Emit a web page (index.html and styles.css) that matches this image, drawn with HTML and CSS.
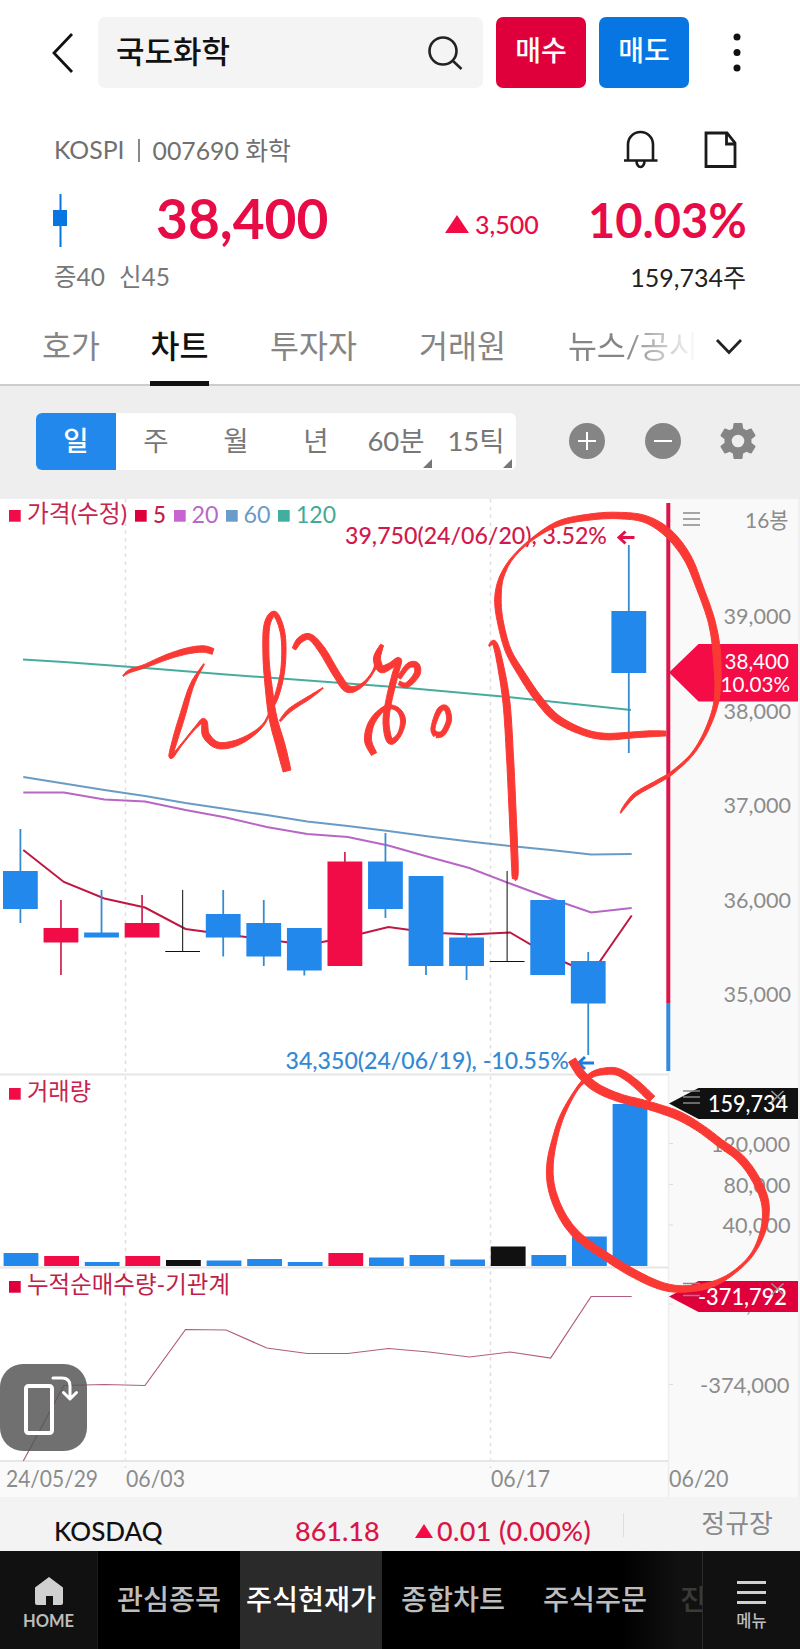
FILE: index.html
```html
<!DOCTYPE html>
<html lang="ko">
<head>
<meta charset="utf-8">
<title>국도화학 - 차트</title>
<link rel="stylesheet" href="styles.css">
</head>
<body>
<div class="app">
  <header class="top">
    <svg class="back" width="24" height="42" viewBox="0 0 24 42"><path d="M21 2 3 21 21 40"/></svg>
    <div class="search">
      <span>국도화학</span>
      <svg width="40" height="40" viewBox="0 0 40 40"><circle cx="18" cy="18" r="13.5"/><path d="m28 28 8.500 8"/></svg>
    </div>
    <button class="trade buy">매수</button>
    <button class="trade sell">매도</button>
    <svg class="more" width="8" height="42" viewBox="0 0 8 42"><circle cx="4" cy="5" r="3.500"/><circle cx="4" cy="20.500" r="3.500"/><circle cx="4" cy="36" r="3.500"/></svg>
  </header>

  <section class="quote">
    <div class="row meta">
      <span>KOSPI</span><i class="bar"></i><span>007690 화학</span>
      <svg class="bell" width="36" height="40" viewBox="0 0 36 40"><path d="M5 30V14.500a12.500 12.500 0 0 1 25 0V30M1 30.500h33.500M13.500 31a4 6 0 0 0 8 0"/></svg>
      <svg class="doc" width="34" height="40" viewBox="0 0 34 40"><path d="M2 3h21l8 10v23.500H2zM22.500 3v11H31"/></svg>
    </div>
    <div class="row price">
      <svg class="mini" width="14" height="53" viewBox="0 0 14 53"><path d="M6.500 0h2v53h-2zM0 16h14v16H0z"/></svg>
      <strong class="now">38,400</strong>
      <svg class="up" width="24" height="18" viewBox="0 0 24 18"><path d="M12 0 24 18H0z"/></svg>
      <span class="diff">3,500</span>
      <strong class="rate">10.03%</strong>
    </div>
    <div class="row sub"><span>증40</span><span>신45</span><span class="vol">159,734주</span></div>
  </section>

  <nav class="tabs">
    <span class="tab">호가</span><span class="tab t2 on">차트</span><span class="tab t3">투자자</span><span class="tab t4">거래원</span><span class="tab t5">뉴스/공시</span>
    <svg class="chev" width="28" height="18" viewBox="0 0 28 18"><path d="m2 2 12 12.500L26 2"/></svg>
  </nav>

  <section class="tools">
    <div class="periods">
      <span class="on">일</span><span>주</span><span>월</span><span>년</span><span class="pick">60분</span><span class="pick">15틱</span>
    </div>
    <svg class="tool" width="36" height="36" viewBox="0 0 36 36"><circle cx="18" cy="18" r="18"/><path d="M9 18h18M18 9v18"/></svg>
    <svg class="tool" width="36" height="36" viewBox="0 0 36 36"><circle cx="18" cy="18" r="18"/><path d="M9 18h18"/></svg>
    <svg class="gear" width="36" height="36" viewBox="2.250 2 19.500 20"><path d="M19.430 12.980c.04-.32.07-.64.07-.98s-.03-.66-.07-.98l2.110-1.650c.19-.15.24-.42.12-.64l-2-3.460c-.12-.22-.39-.3-.61-.22l-2.490 1c-.52-.4-1.080-.73-1.690-.98l-.38-2.650C14.460 2.180 14.250 2 14 2h-4c-.25 0-.46.18-.49.42l-.38 2.650c-.61.25-1.170.59-1.690.98l-2.490-1c-.23-.09-.49 0-.61.22l-2 3.460c-.13.22-.07.49.12.64l2.110 1.650c-.04.32-.07.65-.07.98s.03.66.07.98l-2.110 1.650c-.19.15-.24.42-.12.64l2 3.460c.12.22.39.3.61.22l2.490-1c.52.4 1.080.73 1.690.98l.38 2.650c.03.24.24.42.49.42h4c.25 0 .46-.18.49-.42l.38-2.650c.61-.25 1.170-.59 1.690-.98l2.490 1c.23.09.49 0 .61-.22l2-3.460c.12-.22.07-.49-.12-.64l-2.110-1.650zM12 15.500a3.500 3.500 0 1 1 0-7 3.500 3.500 0 0 1 0 7z"/></svg>
  </section>

  <main class="chart">
    <svg id="chart" width="800" height="998" viewBox="0 499 800 998"></svg>
    <button class="rotate"><svg width="87" height="87" viewBox="0 0 87 87"><rect x="26" y="22" width="26" height="47" rx="2.500" stroke-width="4"/><path d="M53 14h9q8 0 8 8v12M63.500 28.500l6.500 6.500 6.500-6.500" stroke-width="3"/></svg></button>
  </main>

  <section class="ticker">
    <span class="idx">KOSDAQ</span><span class="val">861.18</span>
    <svg width="18" height="14" viewBox="0 0 18 14"><path d="M9 0 18 14H0z"/></svg>
    <span class="chg">0.01 (0.00%)</span><i class="sep"></i><span class="session">정규장</span>
  </section>

  <nav class="bottom">
    <div class="home">
      <svg width="28" height="28" viewBox="0 0 28 28"><path d="M14 0 28 10.500V26q0 2-2 2h-8v-9h-7v9H2q-2 0-2-2V10.500z"/></svg>
      <span>HOME</span>
    </div>
    <span class="item">관심종목</span><span class="item on">주식현재가</span><span class="item">종합차트</span><span class="item">주식주문</span><span class="item cut">진</span>
    <div class="menu">
      <svg width="29" height="26" viewBox="0 0 29 26"><path d="M0 2.500h29M0 12.500h29M0 22.500h29"/></svg>
      <span>메뉴</span>
    </div>
  </nav>
</div>
<script src="chart.js"></script>
</body>
</html>
```

FILE: styles.css
```css
* { box-sizing: border-box; }
body { margin: 0; background: #fff; font-family: Lato, "Noto Sans CJK KR", sans-serif; color: #111; }
button { border: 0; padding: 0; font: inherit; }
svg { display: block; flex: none; }
i { flex: none; }
.app { width: 800px; height: 1649px; display: flex; flex-direction: column; overflow: hidden; }
.app span, .app strong { white-space: nowrap; }

.top { height: 108px; display: flex; align-items: flex-start; padding: 17px 0 0 51px; }
.back { margin-top: 15px; fill: none; stroke: #111; stroke-width: 2.8; }
.search { margin-left: 23px; width: 385px; height: 71px; border-radius: 7px; background: #f4f4f4; display: flex; align-items: center; justify-content: space-between; padding: 0 18px; font-size: 31px; font-weight: 500; line-height: 66px; }
.search span { padding-bottom: 3px; }
.search svg { fill: none; stroke: #222; stroke-width: 2.6; }
.trade { width: 90px; height: 71px; border-radius: 7px; color: #fff; font-size: 28px; font-weight: 500; line-height: 66px; padding-bottom: 5px; }
.buy { margin-left: 13px; background: #df003b; }
.sell { margin-left: 13px; background: #0775e2; }
.more { margin: 15px 0 0 44px; fill: #111; }

.quote { height: 200px; padding-left: 54px; }
.row { display: flex; align-items: center; }
.meta { height: 84px; color: #707070; font-size: 24.8px; }
.meta span { margin-top: -2px; }
.bar { width: 2px; height: 23px; background: #888; margin: 0 13px 0 13px; }
.bell { margin-left: auto; fill: none; stroke: #1a1a1a; stroke-width: 2.6; }
.doc { margin: 0 62px 0 45px; fill: none; stroke: #1a1a1a; stroke-width: 2.8; }
.price { height: 56px; color: #e80c46; }
.mini { fill: #0775e2; margin-left: -1px; }
.now { font-size: 55px; line-height: 56px; margin: -4px 0 0 89px; width: 174px; }
.up { fill: #f40b46; margin: 8px 0 0 115px; }
.diff { font-size: 25px; font-weight: 500; margin: 7px 0 0 6px; width: 67px; }
.rate { font-size: 47px; margin: -1px 0 0 46px; }
.sub { height: 60px; padding-bottom: 5px; color: #777; font-size: 24.5px; gap: 14px; }
.vol { margin-left: auto; margin-right: 54px; color: #222; font-size: 25px; }

.tabs { height: 78px; display: flex; align-items: flex-start; border-bottom: 2px solid #ccc; font-size: 31.5px; color: #858585; padding-left: 42px; }
.tab { height: 76px; line-height: 76px; }
.t2 { margin-left: 50px; color: #111; font-weight: 500; width: 59px; text-align: center; border-bottom: 5px solid #111; height: 78px; }
.t3 { margin-left: 61px; }
.t4 { margin-left: 62px; }
.t5 { margin-left: 62px; width: 126px; overflow: hidden; background: linear-gradient(90deg, #858585 45%, #fff 103%); -webkit-background-clip: text; background-clip: text; color: transparent; }
.chev { margin: 30px 0 0 21px; fill: none; stroke: #222; stroke-width: 2.8; }

.tools { height: 113px; background: #eee; display: flex; align-items: center; padding: 0 0 3px 36px; }
.periods { display: flex; width: 480px; height: 57px; background: #fff; border-radius: 6px; overflow: hidden; color: #777; font-size: 27.5px; }
.periods span { width: 80px; text-align: center; line-height: 55px; position: relative; }
.periods .on { background: #2388ec; color: #fff; font-weight: 500; }
.pick::after { content: ""; position: absolute; right: 4px; bottom: 2px; border-left: 9px solid transparent; border-bottom: 9px solid #777; }
.tool { margin-left: 53px; fill: #858585; stroke-width: 0; }
.tool path { stroke: #fff; stroke-width: 2; }
.tool + .tool { margin-left: 40px; }
.gear { margin-left: 39px; fill: #858585; }

.chart { height: 998px; position: relative; }
.chart text { font-family: Lato, "Noto Sans CJK KR", sans-serif; }
.rotate { position: absolute; left: 0; top: 865px; width: 87px; height: 87px; border-radius: 23px; background: rgba(85, 85, 85, .84); }
.rotate svg { fill: none; stroke: #fff; stroke-linecap: round; stroke-linejoin: round; }

.ticker { height: 54px; background: #f3f3f3; display: flex; align-items: flex-start; padding: 18px 27px 0 54px; font-size: 27px; line-height: 32px; color: #d91548; font-weight: 500; }
.idx { width: 241px; color: #111; font-size: 26px; }
.val { width: 120px; }
.ticker svg { fill: #f40b46; margin: 9px 4px 0 0; }
.chg { width: 186px; letter-spacing: .35px; }
.sep { width: 1px; height: 24px; background: #ddd; margin-top: -2px; }
.session { margin: -8px 0 0 auto; font-size: 26px; font-weight: 400; color: #8a8a8a; }

.bottom { height: 98px; background: linear-gradient(90deg, #000 620px, #111 680px); display: flex; align-items: stretch; color: #bdbdbd; }
.home, .menu { width: 98px; background: #111; display: flex; flex-direction: column; align-items: center; }
.home { padding-top: 26px; font-size: 16.5px; line-height: 22px; font-weight: 700; border-right: 1px solid #1c1c1c; }
.home svg { fill: #d0d0d0; margin-bottom: 5px; }
.item { width: 142px; font-size: 28.3px; line-height: 96px; text-align: center; font-weight: 500; }
.item.on { background: #2a2a2a; color: #fff; }
.cut { width: 36px; overflow: hidden; text-align: left; padding-left: 14px; color: #3a3a3a; }
.menu { border-left: 1px solid #2a2a2a; padding-top: 29px; font-size: 16.5px; line-height: 24px; font-weight: 500; }
.menu svg { stroke: #d0d0d0; stroke-width: 3; margin-bottom: 3px; }
```

FILE: chart.js
```javascript
const root = document.getElementById('chart');
const NS = 'http://www.w3.org/2000/svg';
const RED = '#f20c47', BLUE = '#2388ec', GRAY = '#8c8c8c', INK = '#fa3934';

function el(tag, attrs, content) {
  const node = document.createElementNS(NS, tag);
  for (const key in attrs) node.setAttribute(key, attrs[key]);
  if (content !== undefined) node.textContent = content;
  root.appendChild(node);
  return node;
}
function rect(x, y, width, height, fill) { el('rect', { x, y, width, height, fill }); }
function line(x1, y1, x2, y2, stroke, w = 1.5, extra = {}) {
  el('line', { x1, y1, x2, y2, stroke, 'stroke-width': w, ...extra });
}
function label(content, x1, x2, y, size, fill, weight = 400) {
  el('text', { x: x1, y, 'font-size': size, fill, 'font-weight': weight, textLength: x2 - x1, lengthAdjust: 'spacingAndGlyphs' }, content);
}
function series(points, stroke, w) {
  el('polyline', { points: points.join(' '), fill: 'none', stroke, 'stroke-width': w });
}
const byDay = values => values.map((v, i) => [23.3 + 40.56 * i, v]);

// Panels and grid
rect(0, 499, 800, 998, '#fff');
rect(0, 1461, 800, 36, '#fafafa');
rect(669, 499, 129, 998, '#f9f9f9');
rect(798, 499, 2, 998, '#f0f0f0');
line(668.5, 1071, 668.5, 1497, '#eee', 1.5);
for (const x of [125.5, 490.5]) line(x, 499, x, 1468, '#dedede', 1.5, { 'stroke-dasharray': '3.5 4.3' });
for (const y of [1074.5, 1267.5, 1461]) line(0, y, 668, y, '#e6e6e6', 1.8);

// Moving averages
series(byDay([850, 882, 898.5, 907.5, 929, 934.5, 939.5, 945, 937, 927, 932.5, 934.5, 932.5, 956, 974, 915.5]), '#c01742', 2);
series(byDay([792.5, 792.5, 799.5, 801.5, 810, 817.5, 827, 834, 837, 845.5, 857, 868, 883.5, 898.5, 912.5, 908]), '#b766c6', 2);
series(byDay([777, 783.5, 790, 796, 803, 809, 815, 821.5, 826, 831, 836.5, 841.5, 846, 850, 854.5, 854]), '#6a9bc5', 2);
series([[23, 659.5], [64, 662], [145, 668], [226, 674.5], [308, 680.5], [408, 688], [508, 697], [560, 702.5], [631, 710]], '#46ad9e', 2);

// Candles: high, low, body top, body bottom, colour
const candles = [
  [829, 923, 871, 909, 'b'], [900, 975, 928, 942.5, 'r'], [890, 937, 932.5, 937.5, 'b'], [895, 937, 923, 937.5, 'r'],
  [890, 951, 951, 952, 'k'], [890, 956.5, 914, 937.5, 'b'], [900, 966, 923, 956.5, 'b'], [928, 975.5, 928, 970.5, 'b'],
  [852, 966, 861.5, 966, 'r'], [833, 918, 861.5, 909, 'b'], [876, 975, 876, 966, 'b'], [933, 980, 937.5, 966, 'b'],
  [871, 961, 961, 962, 'k'], [900, 975, 900, 975, 'b'], [952, 1055, 961, 1003.5, 'b'], [545, 753, 611, 673, 'b']
];
candles.forEach(([high, low, top, bottom, c], i) => {
  const x = 20.4 + 40.56 * i;
  const fill = { r: RED, b: BLUE, k: '#111' }[c];
  line(x, high, x, low, { r: '#cf2c5b', b: '#378bd0', k: '#222' }[c], c === 'k' ? 1.1 : 1.8);
  rect(x - 17.4, top, 34.8, bottom - top, fill);
});
rect(666.3, 503, 4, 500, '#dc164c');
rect(666.3, 1003, 4, 68, '#348bd9');

// Volume
const volume = [1253, 1256, 1262, 1256, 1260, 1260.5, 1259, 1262, 1253, 1257.5, 1255, 1259.5, 1246.5, 1255, 1236.5, 1104];
volume.forEach((y, i) => rect(3.6 + 40.6 * i, y, 34.8, 1266 - y, { 1: RED, 3: RED, 8: RED, 4: '#111', 12: '#111' }[i] || BLUE));

// Institutional net buying
series(byDay([1461, 1385.5, 1384.5, 1385.5, 1329.5, 1330, 1348, 1353.5, 1353.5, 1348.5, 1352, 1357, 1352, 1358, 1296.5, 1296.5]), '#b05c80', 1.2);

// Legends
const marks = [[9, 510, '#f20c47'], [135, 510, '#df003b'], [174, 510, '#c864d0'], [226, 510, '#6b9bca'], [278, 510, '#40af9e'], [9, 1088, '#f20c47'], [9, 1281, '#df003b']];
for (const [x, y, fill] of marks) rect(x, y, 11.7, 11.7, fill);
label('가격(수정)', 27, 127, 522, 24, '#c7254f');
label('5', 153, 166, 522.5, 23.5, '#c41c48', 500);
label('20', 191.5, 218.5, 522.5, 23.5, '#b968c8');
label('60', 243.5, 270.5, 522.5, 23.5, '#6c9ac6');
label('120', 296, 336, 522.5, 23.5, '#43a997');
label('거래량', 27, 91, 1100, 24, '#c7254f');
label('누적순매수량-기관계', 27, 230, 1292.5, 24, '#c01f4a');
label('39,750(24/06/20), 3.52%', 345, 607, 544, 23.5, '#d01a4c', 500);
label('34,350(24/06/19), -10.55%', 285.5, 569, 1068.5, 23.5, '#3489d2', 500);

function arrow(x, y, stroke) {
  el('path', { d: `M${x + 17} ${y}H${x + 2}M${x + 8} ${y - 6}L${x + 1.5} ${y}l6.5 6`, fill: 'none', stroke, 'stroke-width': 3 });
}
arrow(617.5, 537.5, '#e2114a');
arrow(577, 1063, '#1d7be0');

// Axis labels
label('16봉', 745, 788.5, 528, 21.5, GRAY);
[['39,000', 624], ['38,000', 719], ['37,000', 812.5], ['36,000', 907.5], ['35,000', 1002]].forEach(([t, y]) => label(t, 723.5, 791, y, 22, GRAY));
label('120,000', 711, 790, 1151.5, 22, GRAY);
label('80,000', 723.5, 790.5, 1193, 22, GRAY);
label('40,000', 722.5, 790.5, 1233, 22, GRAY);
label('-372,000', 700, 789, 1312, 22, GRAY);
label('-374,000', 700, 789.5, 1393, 22, GRAY);
for (const y of [1143.5, 1184.5, 1225, 1304, 1384.5]) line(669, y, 673, y, '#ddd', 1);
label('24/05/29', 6, 98, 1487, 22.5, GRAY);
label('06/03', 126, 185, 1487, 22.5, GRAY);
label('06/17', 491, 550, 1487, 22.5, GRAY);
label('06/20', 669, 728.5, 1487, 22.5, GRAY);

// Current value tags
el('path', { d: 'M669 672.5 698.500 644H798v57.500H698.500z', fill: '#f40c46' });
label('38,400', 724.5, 789, 668.5, 22, '#fff');
label('10.03%', 720.5, 790, 691.5, 22, '#fff');
el('path', { d: 'M669 1103.500 698.500 1088H798v31H698.500z', fill: '#111' });
label('159,734', 708, 788, 1112, 22.5, '#fff', 500);
el('path', { d: 'M669 1296.500 698.500 1281H798v31H698.500z', fill: '#df003b' });
label('-371,792', 698, 787, 1305, 22.5, '#fff', 500);
for (const y of [513, 1091, 1283.5]) for (let k = 0; k < 3; k++) line(683, y + k * 6, 700, y + k * 6, '#888', 1.5);
for (const y of [1091, 1283.5]) el('path', { d: `M771.500 ${y}l12 11m0-11l-12 11`, stroke: '#999', 'stroke-width': 1.5 });

// Pen annotations: every point is x, y, nib width
const strokes = [
  [[666,733.5,5],[650,733.8,6],[632,735,6],[605,736.5,6.5],[582,731.5,6.5],[556,718,7.5],[537,697,7.5],[521,673,7],[508,650,6],[500,620,6],[498,597,6.5],[502,576,4],[514,556,2],[535,537,2.5],[560,523,5],[590,517,6],[618,515.5,6.5],[645,519,7],[668,533,8.5],[687,557,8],[700,588,7],[712,623,7],[717,657,7.5],[717,697,5],[708,727,3.5],[693,753,2.5],[673,772,3],[657,782,3.5],[636,794,3.5],[625,806,2.5],[620.5,813,1]],
  [[489,646,1.5],[494.5,643,4.5],[500,663,6],[506.5,703,7],[510,757,7],[512.5,810,7],[515,870,6.5],[514,879,4]],
  [[123,676,1],[130,671,3],[145,666,3.500],[167,657,5],[187,651,6],[203,649,6.5],[213,651.5,6]],
  [[204,664,1],[192,685,4],[182,717,5.5],[175,740,5],[171,757,3.5],[182,744,1.5],[196,727,2],[204,721,5],[206,735,7],[217,745,6.5],[233,744,6],[250,736,4],[263,725,2],[270,712,1.5],[277,695,4],[283,668,4],[283,635,4.5],[275,614,5],[267,625,6],[266,657,6],[269,690,7],[273,718,8],[281,747,9],[287,771,8]],
  [[280,721,2],[290,710,3.500],[310,697,3],[323,688,1]],
  [[294,649,4],[300,640,6],[310,637,6],[322,650,7],[337,675,7],[348,689,7],[362,685,3],[374,670,2],[378,655,5],[382,645,3],[377,658,7],[381,669,7],[390,666,6],[399,660,5],[395,675,6],[389,700,6],[386,722,6],[390,741,6],[399,735,4],[403,720,5],[397,709,4],[385,708,4],[372,722,6],[368,740,7],[374,754,6]],
  [[399,683,4],[407,685,5],[417,674,6],[416,665,6],[408,666,5],[399,678,4]],
  [[436,735,6],[433,728,4],[439,711,5],[446,708,5],[449,720,5],[443,733,5],[436,735,6]],
  [[572,1060,8],[582,1075,8.5],[597,1088,8.5],[620,1098,8],[647,1105,8],[677,1115,8.5],[700,1128,8],[720,1143,8],[740,1158,8],[755,1178,8],[765,1202,7.5],[764,1227,5.5],[753,1253,3],[733,1273,3],[710,1285,5.5],[683,1289,6.5],[660,1285.5,7.5],[633,1273,8],[607,1257,8],[580,1238,8],[563,1217,7.5],[552,1190,7],[550,1165,6.5],[555,1138,5],[563,1114,4],[577,1089,2.5],[590,1076,5],[603,1071.500,6.5],[618,1072,7],[635,1083,7.5],[652,1099,8]]
];
function ink(points) {
  const left = [], right = [];
  const at = i => points[Math.max(0, Math.min(points.length - 1, i))];
  const samples = [];
  for (let i = 0; i < points.length - 1; i++) {
    const [a, b, c, d] = [at(i - 1), at(i), at(i + 1), at(i + 2)];
    for (let t = 0; t < 1; t += 0.125) {
      samples.push([0, 1, 2].map(k => 0.5 * (2 * b[k] + (c[k] - a[k]) * t + (2 * a[k] - 5 * b[k] + 4 * c[k] - d[k]) * t * t + (3 * b[k] - a[k] - 3 * c[k] + d[k]) * t * t * t)));
    }
  }
  samples.push(at(points.length - 1));
  samples.forEach(([x, y, w], i) => {
    const p = samples[Math.max(0, i - 1)], n = samples[Math.min(samples.length - 1, i + 1)];
    const len = Math.hypot(n[0] - p[0], n[1] - p[1]) || 1;
    const nx = -(n[1] - p[1]) / len * w / 2, ny = (n[0] - p[0]) / len * w / 2;
    left.push([(x + nx).toFixed(1), (y + ny).toFixed(1)]);
    right.unshift([(x - nx).toFixed(1), (y - ny).toFixed(1)]);
  });
  el('path', { d: 'M' + left.concat(right).join('L') + 'Z', fill: INK, stroke: INK, 'stroke-width': 1, 'stroke-linejoin': 'round' });
}
strokes.forEach(ink);
```
